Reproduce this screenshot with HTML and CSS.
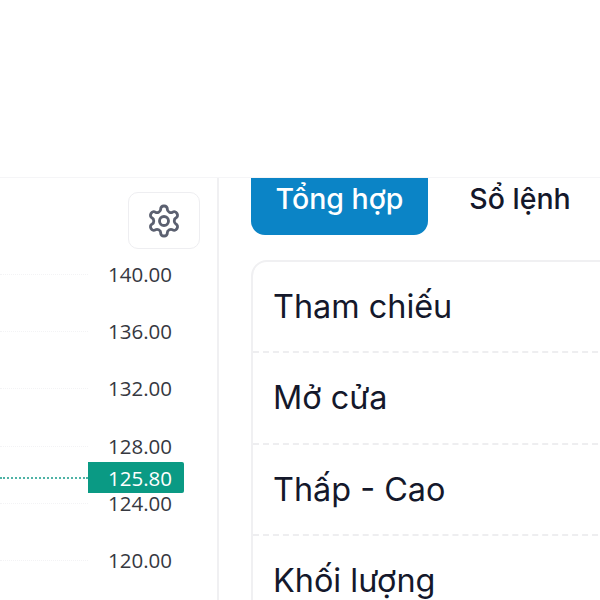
FILE: index.html
```html
<!DOCTYPE html>
<html lang="vi">
<head>
  <meta charset="UTF-8" />
  <title>Tổng hợp</title>
  <link rel="stylesheet" href="styles.css">
</head>
<body>
  <div class="topbar"></div>
  <div class="main">
    <section class="chart">
      <div class="chart-tools">
        <button class="gear" type="button" aria-label="Cài đặt">
          <svg width="36" height="36" viewBox="0 0 24 24" fill="none" stroke="#5b6070" stroke-width="1.9" stroke-linecap="round" stroke-linejoin="round">
            <path d="M12.22 2h-.44a2 2 0 0 0-2 2v.18a2 2 0 0 1-1 1.73l-.43.25a2 2 0 0 1-2 0l-.15-.08a2 2 0 0 0-2.73.73l-.22.38a2 2 0 0 0 .73 2.73l.15.1a2 2 0 0 1 1 1.72v.51a2 2 0 0 1-1 1.74l-.15.09a2 2 0 0 0-.73 2.73l.22.38a2 2 0 0 0 2.73.73l.15-.08a2 2 0 0 1 2 0l.43.25a2 2 0 0 1 1 1.73V20a2 2 0 0 0 2 2h.44a2 2 0 0 0 2-2v-.18a2 2 0 0 1 1-1.73l.43-.25a2 2 0 0 1 2 0l.15.08a2 2 0 0 0 2.73-.73l.22-.39a2 2 0 0 0-.73-2.73l-.15-.08a2 2 0 0 1-1-1.74v-.5a2 2 0 0 1 1-1.74l.15-.09a2 2 0 0 0 .73-2.73l-.22-.38a2 2 0 0 0-2.73-.73l-.15.08a2 2 0 0 1-2 0l-.43-.25a2 2 0 0 1-1-1.73V4a2 2 0 0 0-2-2z"/>
            <circle cx="12" cy="12" r="3"/>
          </svg>
        </button>
      </div>
      <div class="axis">
        <div class="axis-row"><span class="grid-line"></span><span class="price">140.00</span></div>
        <div class="axis-row"><span class="grid-line"></span><span class="price">136.00</span></div>
        <div class="axis-row"><span class="grid-line"></span><span class="price">132.00</span></div>
        <div class="axis-row"><span class="grid-line"></span><span class="price">128.00</span></div>
        <div class="axis-row"><span class="grid-line"></span><span class="price">124.00</span></div>
        <div class="axis-row"><span class="grid-line"></span><span class="price">120.00</span></div>
        <div class="last-price">
          <span class="last-line"></span>
          <span class="last-tag">125.80</span>
        </div>
      </div>
    </section>

    <section class="side">
      <div class="tabs">
        <div class="tab active">Tổng hợp</div>
        <div class="tab">Sổ lệnh</div>
      </div>
      <div class="summary">
        <div class="summary-row">Tham chiếu</div>
        <div class="summary-row">Mở cửa</div>
        <div class="summary-row">Thấp - Cao</div>
        <div class="summary-row">Khối lượng</div>
      </div>
    </section>
  </div>
</body>
</html>
```

FILE: styles.css
```css
* {
  box-sizing: border-box;
  margin: 0;
  padding: 0;
}

html, body {
  height: 600px;
  overflow: hidden;
}

body {
  background: #fff;
  font-family: Inter, "Noto Sans", sans-serif;
  color: #14182b;
}

.topbar {
  height: 178px;
  border-bottom: 1px solid #f5f5f7;
}

.main {
  display: flex;
  height: 422px;
}

/* Biểu đồ */
.chart {
  width: 219px;
  flex-shrink: 0;
  border-right: 2px solid #f0f0f2;
}

.chart-tools {
  display: flex;
  justify-content: flex-end;
  padding: 14px 17px 0 0;
}

.gear {
  width: 72px;
  height: 57px;
  display: flex;
  align-items: center;
  justify-content: center;
  background: #fff;
  border: 1px solid #eeeef1;
  border-radius: 10px;
}

.axis {
  position: relative;
  margin-top: -3px;
}

.axis-row {
  display: flex;
  align-items: center;
  height: 57.2px;
}

.grid-line {
  width: 88px;
  border-top: 1px dotted #f3f3f5;
}

.price {
  margin-left: 20px;
  padding-bottom: 1px;
  font-family: "Open Sans", "Noto Sans", sans-serif;
  font-size: 20.5px;
  line-height: 18px;
  color: #36383f;
}

.last-price {
  position: absolute;
  top: 216px;
  left: 0;
  display: flex;
  align-items: center;
}

.last-line {
  width: 88px;
  border-top: 2px dotted #4fb3a6;
}

.last-tag {
  width: 96px;
  height: 31px;
  padding-left: 20px;
  background: #0a9a84;
  border-radius: 0 2px 2px 0;
  font-family: "Open Sans", "Noto Sans", sans-serif;
  font-size: 20.5px;
  line-height: 32px;
  color: #fff;
}

/* Painel lateral */
.side {
  flex: 1;
  padding-left: 32px;
  min-width: 0;
}

.tabs {
  display: flex;
  height: 57px;
}

.tab {
  width: 184px;
  flex-shrink: 0;
  height: 57px;
  padding-bottom: 16px;
  display: flex;
  align-items: center;
  justify-content: center;
  font-size: 28.5px;
  font-weight: 500;
}

.tab.active {
  width: 177px;
  background: #0b84c6;
  color: #fff;
  border-radius: 0 0 14px 14px;
}

.summary {
  margin-top: 25px;
  margin-right: -20px;
  border: 2px solid #f0f0f2;
  border-radius: 16px 0 0 0;
}

.summary-row {
  height: 91.3px;
  padding: 0 0 0 20px;
  display: flex;
  align-items: center;
  font-size: 32.4px;
  border-bottom: 2px dashed #eeeef0;
}
```
